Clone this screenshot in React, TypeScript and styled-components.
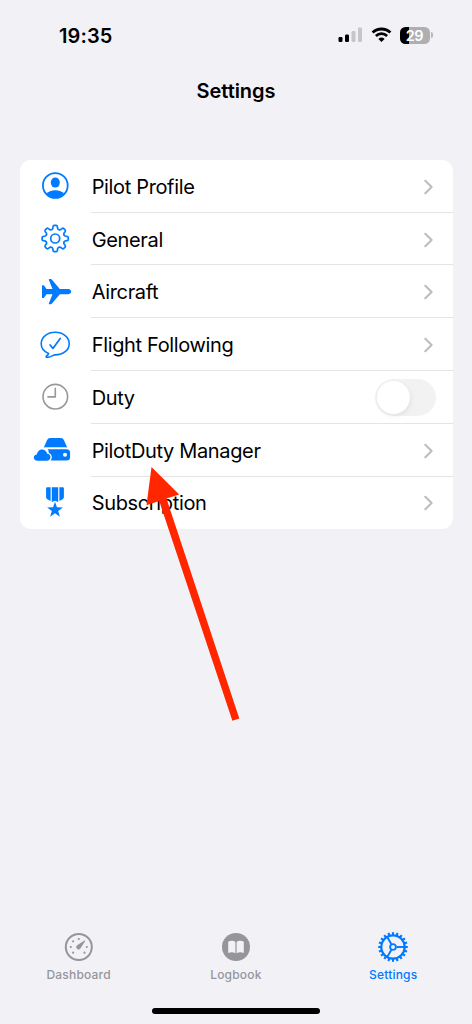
import React from "react";
import styled, { createGlobalStyle } from "styled-components";

const BLUE = "#007aff";
const GREY = "#95959a";

const GlobalStyle = createGlobalStyle`
  *, *::before, *::after { box-sizing: border-box; }
  body { margin: 0; background: #f2f1f6; }
`;

const Screen = styled.div`
  position: relative;
  display: flex;
  flex-direction: column;
  width: 472px;
  height: 1024px;
  overflow: hidden;
  background: #f2f1f6;
  color: #000;
  font-family: Inter, "Liberation Sans", sans-serif;
`;

const StatusBar = styled.header`
  display: flex;
  justify-content: space-between;
  align-items: center;
  height: 70px;
  padding: 1px 39.5px 0 59px;
`;

const Time = styled.span`
  font-size: 20px;
  font-weight: 600;
  letter-spacing: 0.1px;
`;

const StatusIcons = styled.div`
  display: flex;
  align-items: center;
  gap: 8px;
  margin-bottom: 1px;
`;

const Battery = styled.div`
  display: flex;
  align-items: center;
  gap: 1px;
`;

const BatteryBody = styled.div`
  display: flex;
  align-items: center;
  justify-content: center;
  width: 30px;
  height: 17px;
  border-radius: 5.5px;
  background: linear-gradient(to right, #000 9px, #aeaeb3 9px);
  color: #fff;
  font-size: 14.5px;
  font-weight: 600;
  letter-spacing: -0.4px;
`;

const BatteryCap = styled.div`
  width: 2px;
  height: 6px;
  border-radius: 0 2px 2px 0;
  background: #b6b6bb;
`;

const TitleBar = styled.div`
  display: flex;
  justify-content: center;
  align-items: center;
  height: 42px;
`;

const Title = styled.h1`
  margin: 0;
  font-size: 20px;
  font-weight: 600;
  letter-spacing: -0.05px;
`;

const List = styled.ul`
  display: flex;
  flex-direction: column;
  height: 369.5px;
  margin: 47.9px 19.5px 0;
  padding: 0;
  border-radius: 11px;
  background: #fff;
  list-style: none;
`;

const Row = styled.li`
  display: flex;
  flex: 1;
  align-items: stretch;
  gap: 14px;
  padding-left: 13.5px;
`;

const RowIcon = styled.span`
  display: flex;
  align-items: center;
  width: 44px;
`;

const RowBody = styled.div<{ $last?: boolean }>`
  display: flex;
  flex: 1;
  align-items: center;
  justify-content: space-between;
  padding: 2px 17px 0 0.7px;
  border-bottom: 1px solid ${(p) => (p.$last ? "transparent" : "#e4e4e6")};
`;

const Label = styled.span`
  font-size: 20px;
  letter-spacing: -0.35px;
  white-space: nowrap;
`;

const Toggle = styled.span`
  display: flex;
  align-items: center;
  width: 61px;
  height: 37px;
  padding: 2px;
  border-radius: 19px;
  background: #f2f2f2;
`;

const Knob = styled.span`
  width: 33px;
  height: 33px;
  border-radius: 50%;
  background: #fff;
  box-shadow: 1px 2px 5px rgba(0, 0, 0, 0.07);
`;

const TabBar = styled.nav`
  display: grid;
  grid-template-columns: repeat(3, 157.3px);
  margin-top: auto;
  height: 77px;
`;

const Tab = styled.div<{ $active?: boolean }>`
  display: flex;
  flex-direction: column;
  align-items: center;
  gap: 4px;
  color: ${(p) => (p.$active ? BLUE : GREY)};
`;

const TabLabel = styled.span`
  font-size: 12px;
  line-height: 15px;
  font-weight: 500;
  letter-spacing: 0.2px;
`;

const HomeArea = styled.div`
  display: flex;
  justify-content: center;
  height: 16px;
`;

const HomeIndicator = styled.div`
  width: 168px;
  height: 6px;
  border-radius: 3px;
  background: #000;
`;

const Annotation = styled.svg`
  position: absolute;
  left: 140px;
  top: 460px;
`;

const Signal = () => (
  <svg width="25" height="16" viewBox="0 0 25 16">
    <rect x="0.5" y="10" width="4" height="5" rx="1.2" />
    <rect x="7" y="7.5" width="4" height="7.5" rx="1.2" />
    <rect x="13.5" y="4" width="4" height="11" rx="1.2" fill="#c6c6ca" />
    <rect x="20" y="0.5" width="4" height="14.5" rx="1.2" fill="#c6c6ca" />
  </svg>
);

const Wifi = () => (
  <svg width="21" height="16" viewBox="0 0 21 16" fill="none" stroke="#000">
    <path d="M1.6 5.6a12.8 12.8 0 0 1 17.8 0" strokeWidth="2.8" />
    <path d="M4.9 9a8 8 0 0 1 11.2 0" strokeWidth="2.7" />
    <path d="M7.4 11.9a4.5 4.5 0 0 1 6.2 0L10.5 15z" fill="#000" stroke="none" />
  </svg>
);

const Chevron = () => (
  <svg width="12" height="16" viewBox="0 0 12 16" fill="none" stroke="#bdbdbf" strokeWidth="2.1">
    <path d="M1.3 1.8 7.6 8l-6.3 6.2" strokeLinecap="round" strokeLinejoin="round" />
  </svg>
);

const point = (cx: number, cy: number, r: number, deg: number) => {
  const a = (deg * Math.PI) / 180;
  return `${(cx + r * Math.cos(a)).toFixed(2)} ${(cy + r * Math.sin(a)).toFixed(2)}`;
};

const gearPath = (cx: number, cy: number) => {
  let d = "";
  for (let i = 0; i < 8; i++) {
    const t = i * 45 - 90;
    d += `${i ? "L" : "M"}${point(cx, cy, 10.2, t - 14)}`;
    d += `L${point(cx, cy, 12, t - 10.5)}`;
    d += `Q${point(cx, cy, 13.2, t - 9)} ${point(cx, cy, 13.1, t - 4)}`;
    d += `L${point(cx, cy, 13.1, t + 4)}`;
    d += `Q${point(cx, cy, 13.2, t + 9)} ${point(cx, cy, 12, t + 10.5)}`;
    d += `L${point(cx, cy, 10.2, t + 14)}`;
    d += `Q${point(cx, cy, 8.8, t + 22.5)} ${point(cx, cy, 10.2, t + 31)}`;
  }
  return d + "Z";
};

const starPath = (cx: number, cy: number, r: number) =>
  Array.from({ length: 10 }, (_, i) => `${i ? "L" : "M"}${point(cx, cy, i % 2 ? r * 0.4 : r, i * 36 - 90)}`).join("") + "Z";

const IconBox = ({ children }: { children: React.ReactNode }) => (
  <svg width="44" height="40" viewBox="0 0 44 40" fill="none">
    {children}
  </svg>
);

const ProfileIcon = () => (
  <IconBox>
    <circle cx="22.3" cy="19.5" r="12.4" stroke={BLUE} strokeWidth="1.8" />
    <ellipse cx="22.3" cy="16.6" rx="4.5" ry="5" fill={BLUE} />
    <path d="M13.6 27.7c1.6-2.3 4.8-3.5 8.7-3.5s7.1 1.2 8.7 3.5a12 12 0 0 1-17.4 0z" fill={BLUE} />
  </IconBox>
);

const GearIcon = () => (
  <IconBox>
    <path d={gearPath(22.2, 19.5)} stroke={BLUE} strokeWidth="1.7" strokeLinejoin="round" />
    <circle cx="22.2" cy="19.5" r="4.5" stroke={BLUE} strokeWidth="1.7" />
  </IconBox>
);

const PlaneIcon = () => (
  <IconBox>
    <path
      d="M16.2 7h1.4q.8 0 1.4.8l7.8 9.2h8.4q3 .5 3 2.6t-3 2.6h-8.4l-7.8 9.2q-.6.8-1.4.8h-1.4q-.6-.2-.3-1l3.6-9h-6l-2.3 3.2q-.4.5-1 .5h-.8q-.4 0-.4-.5V13.8q0-.5.4-.5h.8q.6 0 1 .5l2.3 3.2h6l-3.6-9q-.3-.8.3-1z"
      fill={BLUE}
    />
  </IconBox>
);

const BubbleIcon = () => (
  <IconBox>
    <path
      d="M15.6 28.5C11 26.5 8.2 23 8.2 18.7 8.2 12.2 14.3 7.3 22.2 7.3S36.2 12.2 36.2 18.7 30.1 29.9 22.2 29.9q-1.3 0-2 .5c-1.5 1-4 2-6.3 2q-1.3-.2-.5-1.2 2-1.5 2.2-2.7z"
      stroke={BLUE}
      strokeWidth="1.6"
      strokeLinejoin="round"
    />
    <path d="m17.1 20 2.8 3.4 7.3-10" stroke={BLUE} strokeWidth="1.7" strokeLinecap="round" strokeLinejoin="round" />
  </IconBox>
);

const ClockIcon = () => (
  <IconBox>
    <circle cx="22.3" cy="19.7" r="12.3" stroke="#98989b" strokeWidth="1.6" />
    <path d="M22.3 11.4v8.5h-7.3" stroke="#98989b" strokeWidth="1.6" strokeLinecap="round" strokeLinejoin="round" />
  </IconBox>
);

const CloudDriveIcon = () => (
  <IconBox>
    <path d="m10.8 17.6 3.1-7.2q.9-2.3 3.3-2.3h10.6q2.4 0 3.3 2.3l3.1 7.2q-.6-.3-1.8-.3H12.6q-1.2 0-1.8.3z" fill={BLUE} />
    <path
      d="M16.5 19.2h17q3.6 0 3.6 3.5v4.4q0 3.5-3.6 3.5H17.6q1.2-1.5 1.2-3.3c0-2.3-1.3-3.8-3-4.4q.2-2.2-1.2-3.7zM32 22.8a2 2 0 1 0 0 4 2 2 0 0 0 0-4z"
      fill={BLUE}
      fillRule="evenodd"
    />
    <path d="M4.4 30.7C2.2 30.7.8 29.2.8 27.5s1.3-3 3-3.1c.5-3 2.5-5 5.2-5 2.6 0 4.6 1.7 5.2 4.3 2 .1 3.3 1.6 3.3 3.5s-1.5 3.5-3.7 3.5z" fill={BLUE} />
  </IconBox>
);

const MedalIcon = () => (
  <IconBox>
    <path
      d="M14.1 4.3h3.5v13.7l-3.3-1.8q-1.2-.8-1.2-2.2V5.3q0-1 1-1zM18.8 4.3h6.4v14.6l-3.2-1.1-3.2 1.1zM26.4 4.3h3.5q1 0 1 1v8.7q0 1.4-1.2 2.2l-3.3 1.8z"
      fill={BLUE}
    />
    <path d={starPath(22, 27, 8.3)} fill={BLUE} />
  </IconBox>
);

const DashboardIcon = () => (
  <svg width="32" height="32" viewBox="0 0 32 32" fill="none">
    <circle cx="15.8" cy="16" r="13" stroke={GREY} strokeWidth="2" />
    {[135, 180, 225, 270, 0, 45].map((deg) => {
      const [x, y] = point(15.8, 16, 8, deg).split(" ");
      return <circle key={deg} cx={x} cy={y} r="1.1" fill={GREY} />;
    })}
    <path d="M21.4 9.5 13.8 14.6a2.3 2.3 0 1 0 3.4 3.1l4.9-7.5q.2-.9-.7-.7z" fill={GREY} />
  </svg>
);

const LogbookIcon = () => (
  <svg width="32" height="32" viewBox="0 0 32 32">
    <circle cx="16" cy="16" r="14" fill={GREY} />
    <path d="M8.2 10.7c2-1.4 5.3-1.5 7.2.2v11.3c-1.9-1.3-5-1.4-7.2-.3zM23.8 10.7c-2-1.4-5.3-1.5-7.2.2v11.3c1.9-1.3 5-1.4 7.2-.3z" fill="#f2f1f6" />
  </svg>
);

const SettingsIcon = () => (
  <svg width="32" height="32" viewBox="0 0 32 32" fill="none" stroke={BLUE}>
    <circle cx="16" cy="16" r="11.7" strokeWidth="2.2" />
    {Array.from({ length: 20 }, (_, i) => (
      <path key={i} d={`M${point(16, 16, 12, i * 18)}L${point(16, 16, 14.8, i * 18)}`} strokeWidth="2.1" />
    ))}
    <circle cx="16" cy="16" r="2.9" strokeWidth="1.8" />
    {[0, 120, 240].map((deg) => (
      <path key={deg} d={`M${point(16, 16, 3.5, deg)}L${point(16, 16, 11.5, deg)}`} strokeWidth="1.9" />
    ))}
  </svg>
);

const rows = [
  { label: "Pilot Profile", icon: <ProfileIcon /> },
  { label: "General", icon: <GearIcon /> },
  { label: "Aircraft", icon: <PlaneIcon /> },
  { label: "Flight Following", icon: <BubbleIcon /> },
  { label: "Duty", icon: <ClockIcon />, toggle: true },
  { label: "PilotDuty Manager", icon: <CloudDriveIcon /> },
  { label: "Subscription", icon: <MedalIcon /> },
];

export default function App() {
  return (
    <>
      <GlobalStyle />
      <Screen>
        <StatusBar>
          <Time>19:35</Time>
          <StatusIcons>
            <Signal />
            <Wifi />
            <Battery>
              <BatteryBody>29</BatteryBody>
              <BatteryCap />
            </Battery>
          </StatusIcons>
        </StatusBar>
        <TitleBar>
          <Title>Settings</Title>
        </TitleBar>
        <List>
          {rows.map((row, i) => (
            <Row key={row.label}>
              <RowIcon>{row.icon}</RowIcon>
              <RowBody $last={i === rows.length - 1}>
                <Label>{row.label}</Label>
                {row.toggle ? (
                  <Toggle>
                    <Knob />
                  </Toggle>
                ) : (
                  <Chevron />
                )}
              </RowBody>
            </Row>
          ))}
        </List>
        <TabBar>
          <Tab>
            <DashboardIcon />
            <TabLabel>Dashboard</TabLabel>
          </Tab>
          <Tab>
            <LogbookIcon />
            <TabLabel>Logbook</TabLabel>
          </Tab>
          <Tab $active>
            <SettingsIcon />
            <TabLabel>Settings</TabLabel>
          </Tab>
        </TabBar>
        <HomeArea>
          <HomeIndicator />
        </HomeArea>
        <Annotation width="110" height="270" viewBox="140 460 110 270">
          <path d="M151.5 467 179.2 494.5 166.5 498.6 239.3 718.5 232.4 720.8 159.2 501 146.5 505.2z" fill="#ff2600" />
        </Annotation>
      </Screen>
    </>
  );
}
